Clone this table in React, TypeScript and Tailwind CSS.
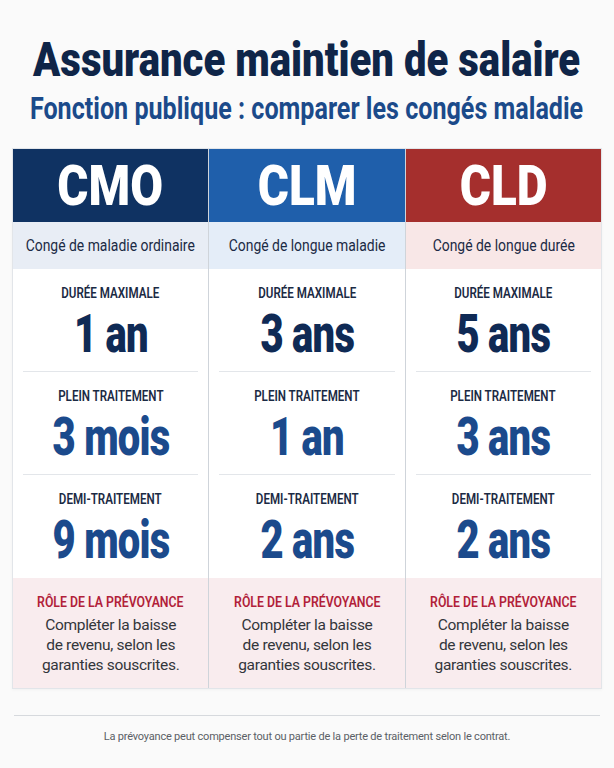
import React from 'react';

type Col = {
  code: string;
  name: string;
  head: string;
  sub: string;
  values: string[];
};

const COLS: Col[] = [
  { code: 'CMO', name: 'Congé de maladie ordinaire', head: 'bg-[#0f3262]', sub: 'bg-[#e8edf5]', values: ['1 an', '3 mois', '9 mois'] },
  { code: 'CLM', name: 'Congé de longue maladie', head: 'bg-[#1f5fab]', sub: 'bg-[#e4edf8]', values: ['3 ans', '1 an', '2 ans'] },
  { code: 'CLD', name: 'Congé de longue durée', head: 'bg-[#a52f2d]', sub: 'bg-[#f8e7e7]', values: ['5 ans', '3 ans', '2 ans'] },
];

const LABELS = ['DURÉE MAXIMALE', 'PLEIN TRAITEMENT', 'DEMI-TRAITEMENT'];

function Column({ col }: { col: Col }) {
  return (
    <div className="flex flex-col bg-white">
      <div className={`${col.head} h-[73px] flex items-center justify-center`}>
        <span className="inline-block text-white text-[56px] font-black leading-none scale-x-[0.85] whitespace-nowrap">
          {col.code}
        </span>
      </div>
      <div className={`${col.sub} h-[47px] flex items-center justify-center`}>
        <span className="inline-block text-[#1b2a44] text-[16px] leading-none scale-x-[0.87] whitespace-nowrap">
          {col.name}
        </span>
      </div>
      <div className="px-[10px]">
        {col.values.map((v, i) => (
          <div
            key={i}
            className={`flex flex-col items-center h-[103px] pt-[18px] ${i < 2 ? 'border-b border-[#e3e6ea]' : ''}`}
          >
            <span className="inline-block text-[#1b2a44] text-[14.5px] font-semibold leading-none scale-x-[0.8] whitespace-nowrap">
              {LABELS[i]}
            </span>
            <span
              className={`inline-block mt-[5px] text-[54px] font-black leading-none tracking-[-1px] scale-x-[0.74] whitespace-nowrap ${i === 0 ? 'text-[#0f2a55]' : 'text-[#1b4a8c]'}`}
            >
              {v}
            </span>
          </div>
        ))}
      </div>
      <div className="bg-[#f9ecee] h-[110px] flex flex-col items-center pt-[17px]">
        <span className="inline-block text-[#b21f3a] text-[15px] font-semibold leading-none scale-x-[0.82] whitespace-nowrap">
          RÔLE DE LA PRÉVOYANCE
        </span>
        <p className="mt-[5px] text-[#33363b] text-[15.5px] leading-[20px] tracking-[-0.3px] text-center">
          Compléter la baisse
          <br />
          de revenu, selon les
          <br />
          garanties souscrites.
        </p>
      </div>
    </div>
  );
}

export default function App() {
  return (
    <div className="w-[614px] h-[768px] bg-[#fafafa] font-['Roboto',sans-serif] flex flex-col items-center">
      <h1 className="mt-[36px] inline-block text-[#0f2548] text-[48px] font-black leading-none scale-x-[0.835] whitespace-nowrap">
        Assurance maintien de salaire
      </h1>
      <h2 className="mt-[9px] inline-block text-[#1b4a8a] text-[31px] font-bold leading-none scale-x-[0.81] whitespace-nowrap">
        Fonction publique : comparer les congés maladie
      </h2>
      <div className="mt-[24px] w-[590px] grid grid-cols-3 gap-px bg-[#cfd4da] border border-[#e2e5e9] shadow-[0_1px_3px_rgba(0,0,0,0.04)]">
        {COLS.map((c) => (
          <Column key={c.code} col={c} />
        ))}
      </div>
      <div className="mt-[26px] w-[586px] h-px bg-[#d6d9dd]" />
      <p className="mt-[13px] text-[#5a5f66] text-[11px] leading-[16px] tracking-[-0.2px]">
        La prévoyance peut compenser tout ou partie de la perte de traitement selon le contrat.
      </p>
    </div>
  );
}
